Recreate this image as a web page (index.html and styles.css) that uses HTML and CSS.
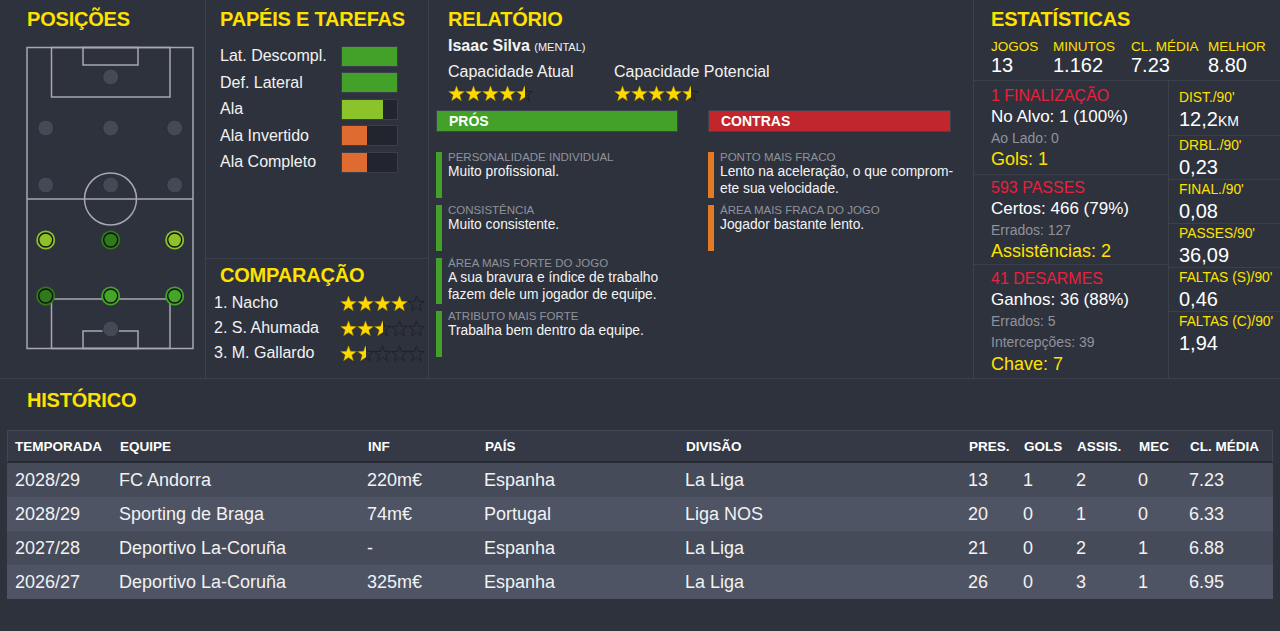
FILE: index.html
```html
<!DOCTYPE html>
<html lang="pt">
<head>
<meta charset="utf-8">
<title>Isaac Silva</title>
<link rel="stylesheet" href="styles.css">
</head>
<body>
<svg class="defs" width="0" height="0" aria-hidden="true">
  <symbol id="star" viewBox="0 0 17 17">
    <polygon points="8.5,0.8 10.5,6.3 16.4,6.5 11.8,10.1 13.4,15.8 8.5,12.5 3.6,15.8 5.2,10.1 0.6,6.5 6.5,6.3"/>
  </symbol>
  <g id="row-o">
    <use href="#star" x="0" width="17" height="17"/><use href="#star" x="17" width="17" height="17"/><use href="#star" x="34" width="17" height="17"/><use href="#star" x="51" width="17" height="17"/><use href="#star" x="68" width="17" height="17"/>
  </g>
</svg>

<div class="top">
  <section class="col col-pos">
    <h2 class="hd">POSIÇÕES</h2>
    <svg class="pitch" width="168" height="304" viewBox="0 0 168 304">
      <g fill="none" stroke="#a7a9ae" stroke-width="1.5">
        <rect x="1" y="1.5" width="166" height="301"/>
        <line x1="1" y1="153" x2="167" y2="153"/>
        <circle cx="84.5" cy="153" r="26"/>
        <rect x="25.5" y="1.5" width="118.5" height="49.5"/>
        <rect x="57" y="1.5" width="55" height="17.5"/>
        <rect x="25.5" y="253" width="118.5" height="49.5"/>
        <rect x="57" y="285" width="55" height="17.5"/>
      </g>
      <g fill="#454955" stroke="#2a2d35" stroke-width="1">
        <circle cx="84.7" cy="31" r="8"/>
        <circle cx="19.7" cy="82" r="8"/><circle cx="84.7" cy="82" r="8"/><circle cx="148.7" cy="82" r="8"/>
        <circle cx="19.7" cy="139" r="8"/><circle cx="84.7" cy="139" r="8"/><circle cx="148.7" cy="139" r="8"/>
        <circle cx="84.7" cy="283" r="8"/>
      </g>
      <g stroke="#111" stroke-width="1.4">
        <circle cx="19.7" cy="194" r="9.5" fill="#8cc12c" stroke="none"/><circle cx="19.7" cy="194" r="7" fill="#8cc12c"/>
        <circle cx="84.7" cy="194" r="9.5" fill="#2f7a1a" stroke="none"/><circle cx="84.7" cy="194" r="7" fill="#2f7a1a"/>
        <circle cx="148.7" cy="194" r="9.5" fill="#8cc12c" stroke="none"/><circle cx="148.7" cy="194" r="7" fill="#8cc12c"/>
        <circle cx="19.7" cy="250" r="9.5" fill="#2f7a1a" stroke="none"/><circle cx="19.7" cy="250" r="7" fill="#2f7a1a"/>
        <circle cx="84.7" cy="250" r="9.5" fill="#44a52a" stroke="none"/><circle cx="84.7" cy="250" r="7" fill="#44a52a"/>
        <circle cx="148.7" cy="250" r="9.5" fill="#44a52a" stroke="none"/><circle cx="148.7" cy="250" r="7" fill="#44a52a"/>
      </g>
    </svg>
  </section>

  <section class="col col-roles">
    <div class="roles-top">
      <h2 class="hd">PAPÉIS E TAREFAS</h2>
      <div class="roles">
        <div class="role"><span class="role-name">Lat. Descompl.</span><span class="meter"><span class="meter-fill green" style="width:100%"></span></span></div>
        <div class="role"><span class="role-name">Def. Lateral</span><span class="meter"><span class="meter-fill green" style="width:100%"></span></span></div>
        <div class="role"><span class="role-name">Ala</span><span class="meter"><span class="meter-fill lime" style="width:74%"></span></span></div>
        <div class="role"><span class="role-name">Ala Invertido</span><span class="meter"><span class="meter-fill orange" style="width:45%"></span></span></div>
        <div class="role"><span class="role-name">Ala Completo</span><span class="meter"><span class="meter-fill orange" style="width:45%"></span></span></div>
      </div>
    </div>
    <div class="compare">
      <h2 class="hd">COMPARAÇÃO</h2>
      <div class="cmp-row"><span class="cmp-name">1. Nacho</span>
        <span class="stars"><svg class="s-empty" width="85" height="17" viewBox="0 0 85 17"><use href="#row-o"/></svg><span class="s-fill" style="width:80%"><svg width="85" height="17" viewBox="0 0 85 17"><use href="#row-o"/></svg></span></span></div>
      <div class="cmp-row"><span class="cmp-name">2. S. Ahumada</span>
        <span class="stars"><svg class="s-empty" width="85" height="17" viewBox="0 0 85 17"><use href="#row-o"/></svg><span class="s-fill" style="width:50%"><svg width="85" height="17" viewBox="0 0 85 17"><use href="#row-o"/></svg></span></span></div>
      <div class="cmp-row"><span class="cmp-name">3. M. Gallardo</span>
        <span class="stars"><svg class="s-empty" width="85" height="17" viewBox="0 0 85 17"><use href="#row-o"/></svg><span class="s-fill" style="width:30%"><svg width="85" height="17" viewBox="0 0 85 17"><use href="#row-o"/></svg></span></span></div>
    </div>
  </section>

  <section class="col col-report">
    <h2 class="hd">RELATÓRIO</h2>
    <div class="rep-name">Isaac Silva <small>(MENTAL)</small></div>
    <div class="caps">
      <div class="cap">
        <div class="cap-lab">Capacidade Atual</div>
        <span class="stars"><svg class="s-empty" width="85" height="17" viewBox="0 0 85 17"><use href="#row-o"/></svg><span class="s-fill" style="width:90%"><svg width="85" height="17" viewBox="0 0 85 17"><use href="#row-o"/></svg></span></span>
      </div>
      <div class="cap">
        <div class="cap-lab">Capacidade Potencial</div>
        <span class="stars"><svg class="s-empty" width="85" height="17" viewBox="0 0 85 17"><use href="#row-o"/></svg><span class="s-fill" style="width:90%"><svg width="85" height="17" viewBox="0 0 85 17"><use href="#row-o"/></svg></span></span>
      </div>
    </div>
    <div class="pc">
      <div class="pc-col">
        <div class="pc-head pros">PRÓS</div>
        <div class="items">
          <div class="item"><span class="ibar g"></span><div><div class="ilab">PERSONALIDADE INDIVIDUAL</div><div class="itxt">Muito profissional.</div></div></div>
          <div class="item"><span class="ibar g"></span><div><div class="ilab">CONSISTÊNCIA</div><div class="itxt">Muito consistente.</div></div></div>
          <div class="item"><span class="ibar g"></span><div><div class="ilab">ÁREA MAIS FORTE DO JOGO</div><div class="itxt">A sua bravura e índice de trabalho<br>fazem dele um jogador de equipe.</div></div></div>
          <div class="item"><span class="ibar g"></span><div><div class="ilab">ATRIBUTO MAIS FORTE</div><div class="itxt">Trabalha bem dentro da equipe.</div></div></div>
        </div>
      </div>
      <div class="pc-col">
        <div class="pc-head cons">CONTRAS</div>
        <div class="items">
          <div class="item"><span class="ibar o"></span><div><div class="ilab">PONTO MAIS FRACO</div><div class="itxt">Lento na aceleração, o que comprom-<br>ete sua velocidade.</div></div></div>
          <div class="item"><span class="ibar o"></span><div><div class="ilab">ÁREA MAIS FRACA DO JOGO</div><div class="itxt">Jogador bastante lento.</div></div></div>
        </div>
      </div>
    </div>
  </section>

  <section class="col col-stats">
    <div class="st-top">
      <h2 class="hd">ESTATÍSTICAS</h2>
      <div class="st-grid">
        <span class="st-l">JOGOS</span><span class="st-l">MINUTOS</span><span class="st-l">CL. MÉDIA</span><span class="st-l">MELHOR</span>
        <span class="st-v">13</span><span class="st-v">1.162</span><span class="st-v">7.23</span><span class="st-v">8.80</span>
      </div>
    </div>
    <div class="st-body">
      <div class="st-left">
        <div class="blk b1">
          <div class="red">1 FINALIZAÇÃO</div>
          <div class="main">No Alvo: 1 (100%)</div>
          <div class="sub">Ao Lado: 0</div>
          <div class="big">Gols: 1</div>
        </div>
        <div class="blk b2">
          <div class="red">593 PASSES</div>
          <div class="main">Certos: 466 (79%)</div>
          <div class="sub">Errados: 127</div>
          <div class="big">Assistências: 2</div>
        </div>
        <div class="blk b3">
          <div class="red">41 DESARMES</div>
          <div class="main">Ganhos: 36 (88%)</div>
          <div class="sub">Errados: 5</div>
          <div class="sub">Intercepções: 39</div>
          <div class="big">Chave: 7</div>
        </div>
      </div>
      <div class="st-right">
        <div class="cell first"><div class="c-l">DIST./90'</div><div class="c-v">12,2<span class="unit">KM</span></div></div>
        <div class="cell"><div class="c-l">DRBL./90'</div><div class="c-v">0,23</div></div>
        <div class="cell"><div class="c-l">FINAL./90'</div><div class="c-v">0,08</div></div>
        <div class="cell"><div class="c-l">PASSES/90'</div><div class="c-v">36,09</div></div>
        <div class="cell"><div class="c-l">FALTAS (S)/90'</div><div class="c-v">0,46</div></div>
        <div class="cell last"><div class="c-l">FALTAS (C)/90'</div><div class="c-v">1,94</div></div>
      </div>
    </div>
  </section>
</div>

<section class="hist">
  <h2 class="hd">HISTÓRICO</h2>
  <div class="tbl">
    <div class="tr th"><span>TEMPORADA</span><span>EQUIPE</span><span>INF</span><span>PAÍS</span><span>DIVISÃO</span><span>PRES.</span><span>GOLS</span><span>ASSIS.</span><span>MEC</span><span>CL. MÉDIA</span></div>
    <div class="tr"><span>2028/29</span><span>FC Andorra</span><span>220m€</span><span>Espanha</span><span>La Liga</span><span>13</span><span>1</span><span>2</span><span>0</span><span>7.23</span></div>
    <div class="tr"><span>2028/29</span><span>Sporting de Braga</span><span>74m€</span><span>Portugal</span><span>Liga NOS</span><span>20</span><span>0</span><span>1</span><span>0</span><span>6.33</span></div>
    <div class="tr"><span>2027/28</span><span>Deportivo La-Coruña</span><span>-</span><span>Espanha</span><span>La Liga</span><span>21</span><span>0</span><span>2</span><span>1</span><span>6.88</span></div>
    <div class="tr"><span>2026/27</span><span>Deportivo La-Coruña</span><span>325m€</span><span>Espanha</span><span>La Liga</span><span>26</span><span>0</span><span>3</span><span>1</span><span>6.95</span></div>
  </div>
</section>
</body>
</html>
```

FILE: styles.css
```css
* { box-sizing: border-box; }
html, body { margin: 0; padding: 0; }
body {
  width: 1280px;
  height: 631px;
  overflow: hidden;
  background: #2e323d;
  color: #fff;
  font-family: "Liberation Sans", Arial, Helvetica, sans-serif;
}
.defs { position: absolute; width: 0; height: 0; overflow: hidden; }

.hd {
  margin: 0;
  padding-top: 7px;
  font-size: 20px;
  line-height: 24px;
  font-weight: 700;
  color: #ffe100;
  letter-spacing: -0.2px;
}

.top {
  display: flex;
  height: 379px;
  border-bottom: 1px solid #3c404b;
}
.col { border-right: 1px solid #3c404b; height: 100%; }

/* positions */
.col-pos { width: 206px; padding-left: 26px; }
.col-pos .hd { padding-left: 1px; }
.pitch { display: block; margin-top: 15px; }

/* roles */
.col-roles { width: 223px; display: flex; flex-direction: column; }
.roles-top { height: 259px; border-bottom: 1px solid #3c404b; padding-left: 14px; }
.roles { margin-top: 12px; }
.role { display: flex; align-items: center; height: 26.5px; }
.role-name { width: 121px; font-size: 16px; color: #f2f2f2; }
.meter {
  width: 57px; height: 21px;
  background: #22252e;
  border: 1px solid #3a3e4a;
  display: flex;
}
.meter-fill { height: 100%; }
.green { background: #43a12a; }
.lime { background: #8bc32b; }
.orange { background: #e06b30; }

.compare { padding-left: 8px; }
.compare .hd { padding-top: 4px; padding-left: 6px; }
.cmp-row { display: flex; align-items: center; height: 25px; }
.compare .hd + .cmp-row { margin-top: 3.5px; }
.cmp-name { width: 126px; font-size: 16px; color: #f2f2f2; }

.stars { position: relative; display: inline-block; width: 85px; height: 17px; vertical-align: top; }
.stars svg { display: block; }
.s-empty use { fill: none; stroke: #1f2228; stroke-width: 1; }
.s-fill { position: absolute; left: 0; top: 0; height: 17px; overflow: hidden; }
.s-fill use { fill: #ffd900; stroke: #a88f00; stroke-width: 0.5; }

/* report */
.col-report { width: 545px; padding-left: 7px; }
.col-report .hd { padding-left: 12px; }
.rep-name { padding-left: 12px; margin-top: 6px; font-size: 16px; line-height: 18px; font-weight: 700; color: #f4f4f4; }
.rep-name small { font-size: 11px; font-weight: 400; }
.caps { display: flex; padding-left: 12px; margin-top: 6px; }
.cap { width: 166px; }
.cap-lab { font-size: 16px; line-height: 20px; color: #f2f2f2; }
.cap .stars { margin-top: 3px; }
.pc { display: grid; grid-template-columns: 242px 243px; column-gap: 30px; margin-top: 8px; }
.pc-head {
  height: 22px;
  line-height: 20px;
  padding-left: 12px;
  font-size: 14px;
  font-weight: 700;
  color: #fff;
  border: 1px solid #3c4452;
}
.pros { background: #43a12a; }
.cons { background: #c0262b; }
.items { margin-top: 20px; display: flex; flex-direction: column; gap: 7.5px; }
.item { display: flex; gap: 6px; min-height: 45.5px; }
.ibar { width: 6px; flex: none; }
.ibar.g { background: #43a12a; }
.ibar.o { background: #e57a26; }
.ilab { font-size: 11.5px; line-height: 11px; color: #8e929b; white-space: nowrap; }
.itxt { font-size: 13.8px; line-height: 17px; color: #f4f4f4; white-space: nowrap; }

/* stats */
.col-stats { width: 306px; border-right: none; display: flex; flex-direction: column; }
.st-top { height: 81px; border-bottom: 1px solid #3c404b; padding-left: 17px; }
.st-grid {
  display: grid;
  grid-template-columns: 62px 78px 77px 1fr;
  margin-top: 8px;
}
.st-l { font-size: 13.5px; line-height: 15px; color: #ffe100; }
.st-v { font-size: 20px; line-height: 22px; color: #fff; }
.st-body { display: flex; flex: 1; }
.st-left { width: 195px; border-right: 1px solid #3c404b; display: flex; flex-direction: column; }
.blk { padding-left: 17px; border-bottom: 1px solid #3c404b; }
.blk.b1 { height: 94px; padding-top: 3.5px; }
.blk.b2 { height: 90px; padding-top: 1.5px; }
.blk.b3 { flex: 1; padding-top: 2.5px; border-bottom: none; }
.blk > div { line-height: 21.5px; }
.red { font-size: 16px; color: #e8203c; }
.main { font-size: 17px; color: #fff; }
.sub { font-size: 14px; color: #8e929b; }
.big { font-size: 18px; color: #ffe100; }
.st-right { flex: 1; display: flex; flex-direction: column; }
.cell { height: 44px; padding: 3px 0 0 10px; border-bottom: 1px solid #3c404b; }
.cell.first { height: 55px; padding-top: 10px; }
.cell.last { border-bottom: none; flex: 1; }
.c-l { font-size: 13.8px; line-height: 14px; color: #ffe100; white-space: nowrap; }
.c-v { font-size: 20px; line-height: 24px; margin-top: 2px; color: #fff; }
.unit { font-size: 14px; }

/* history */
.hist { padding-top: 9px; }
.hist .hd { padding-top: 0; padding-left: 27px; }
.tbl { margin: 18px 0 0 7px; width: 1266px; }
.tr {
  display: grid;
  grid-template-columns: 104px 248px 117px 201px 283px 55px 53px 62px 51px 92px;
  height: 34px;
  align-items: center;
  font-size: 18px;
  color: #f2f2f2;
}
.tr > span { padding-left: 8px; white-space: nowrap; }
.tr:nth-child(even) { background: #464b5a; }
.tr:nth-child(odd) { background: #4e5464; }
.tr.th {
  height: 33px;
  background: #343945;
  border: 1px solid #414653;
  border-bottom: 2px solid #262a32;
  font-size: 13.5px;
  font-weight: 700;
  color: #fff;
}
.tr.th > span:first-child { padding-left: 7px; }
```
